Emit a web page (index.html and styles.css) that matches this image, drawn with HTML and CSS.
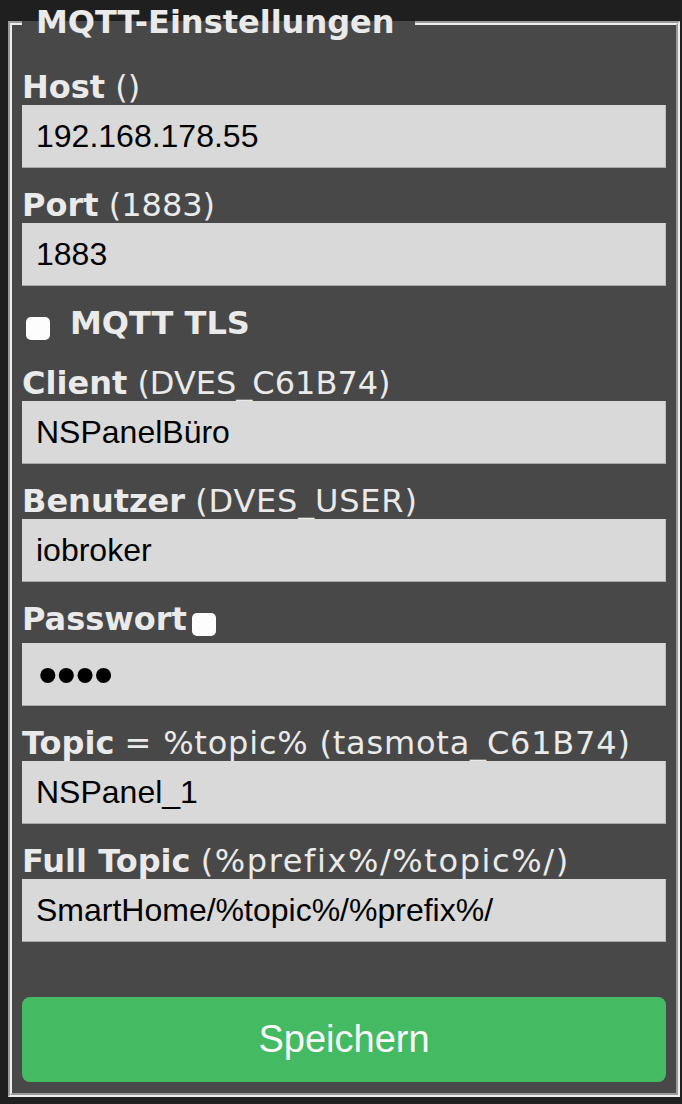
FILE: index.html
```html
<!DOCTYPE html>
<html lang="de">
<head>
<meta charset="utf-8">
<title>MQTT-Einstellungen</title>
<link rel="stylesheet" href="styles.css">
</head>
<body>
<fieldset class="panel">
  <legend class="panel-title">MQTT-Einstellungen</legend>
  <form class="form">
    <div class="field first">
      <label class="label"><b>Host</b> <span class="hint">()</span></label>
      <input class="input" type="text" value="192.168.178.55">
    </div>
    <div class="field">
      <label class="label"><b>Port</b> <span class="hint">(1883)</span></label>
      <input class="input" type="text" value="1883">
    </div>
    <div class="field check-row">
      <input class="check" type="checkbox">
      <b class="check-text">MQTT TLS</b>
    </div>
    <div class="field after-check">
      <label class="label"><b>Client</b> <span class="hint">(DVES_C61B74)</span></label>
      <input class="input" type="text" value="NSPanelBüro">
    </div>
    <div class="field">
      <label class="label"><b>Benutzer</b> <span class="hint wide">(DVES_USER)</span></label>
      <input class="input" type="text" value="iobroker">
    </div>
    <div class="field">
      <label class="label label-pw"><b>Passwort</b><input class="check check-pw" type="checkbox"></label>
      <input class="input input-pw" type="password" value="xxxx">
    </div>
    <div class="field">
      <label class="label"><b>Topic</b> <span class="hint wide">= %topic% (tasmota_C61B74)</span></label>
      <input class="input" type="text" value="NSPanel_1">
    </div>
    <div class="field">
      <label class="label"><b>Full Topic</b> <span class="hint wider">(%prefix%/%topic%/)</span></label>
      <input class="input" type="text" value="SmartHome/%topic%/%prefix%/">
    </div>
    <button class="save" type="button">Speichern</button>
  </form>
</fieldset>
</body>
</html>
```

FILE: styles.css
```css
html, body {
  margin: 0;
  padding: 0;
  background: #1f1f1f;
}

body {
  font-family: "DejaVu Sans", Verdana, sans-serif;
  color: #eaeaea;
  height: 1104px;
  overflow: hidden;
}

.panel {
  margin: 5px 2px 0 8px;
  padding: 0 10px 11px 10px;
  border: 4px groove #ededed;
  background: #484848;
  min-width: 0;
}

.panel-title {
  padding: 0 20px 0 14px;
  font-size: 32px;
  font-weight: bold;
  line-height: 35px;
  color: #eaeaea;
}

.form {
  display: flex;
  flex-direction: column;
  margin: 0;
}

.field {
  display: flex;
  flex-direction: column;
  margin-top: 20px;
}

.field.first {
  margin-top: 30px;
}

.label {
  display: block;
  font-size: 32px;
  line-height: 35px;
  height: 35px;
  white-space: nowrap;
}

.label b {
  font-weight: bold;
}

.hint {
  font-weight: normal;
}

.hint.wide {
  letter-spacing: 0.8px;
}

.hint.wider {
  letter-spacing: 1.6px;
}

.label-pw {
  height: 41px;
}

.input {
  box-sizing: border-box;
  width: 100%;
  height: 63px;
  margin: 0;
  padding: 0 14px;
  border: none;
  border-bottom: 1px solid #a9a9a9;
  border-right: 1px solid #bdbdbd;
  border-radius: 0;
  background: #d9d9d9;
  color: #000;
  font-family: "Liberation Sans", Arial, sans-serif;
  font-size: 32px;
  outline: none;
}

.input-pw {
  padding-left: 16px;
  font-size: 56px;
  letter-spacing: -1px;
}

.check {
  -webkit-appearance: none;
  appearance: none;
  box-sizing: border-box;
  width: 24px;
  height: 23px;
  margin: 0;
  border: none;
  border-radius: 5px;
  background: #fdfdfd;
  flex: none;
  vertical-align: top;
}

.check-row {
  flex-direction: row;
  align-items: flex-start;
  height: 35px;
}

.check-row .check {
  margin: 11px 0 0 4px;
}

.check-text {
  margin-left: 20px;
  font-size: 32px;
  line-height: 35px;
  font-weight: bold;
}

.after-check {
  margin-top: 25px;
}

.check-pw {
  margin: 11px 0 0 5px;
}

.save {
  margin-top: 55px;
  height: 85px;
  width: 100%;
  border: none;
  border-radius: 8px;
  background: #44ba63;
  color: #fafafa;
  font-family: "Liberation Sans", Arial, sans-serif;
  font-size: 38px;
  padding: 0;
}
```
